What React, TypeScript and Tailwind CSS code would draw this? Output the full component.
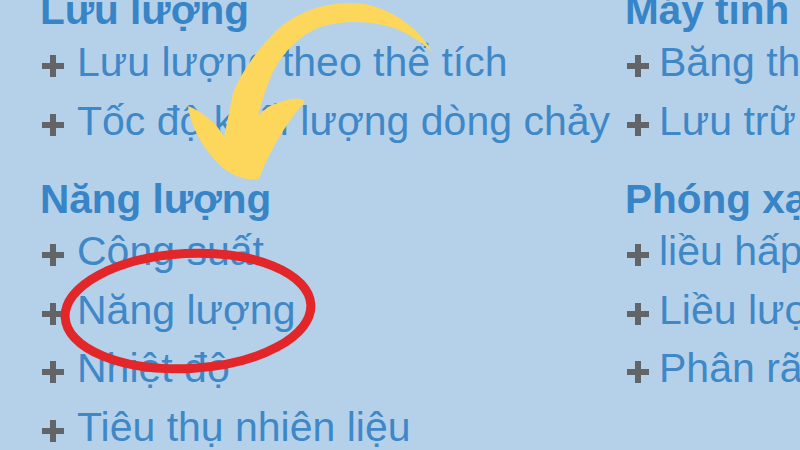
import React from "react";

type Group = { title: string; items: string[] };

const left: Group[] = [
  { title: "Lưu lượng", items: ["Lưu lượng theo thể tích", "Tốc độ khối lượng dòng chảy"] },
  { title: "Năng lượng", items: ["Công suất", "Năng lượng", "Nhiệt độ", "Tiêu thụ nhiên liệu"] },
];

const right: Group[] = [
  { title: "Máy tính", items: ["Băng thông", "Lưu trữ dữ liệu"] },
  { title: "Phóng xạ", items: ["liều hấp thụ", "Liều lượng tương đương", "Phân rã phóng xạ"] },
];

function Plus() {
  return (
    <svg width="22" height="22" viewBox="0 0 22 22" className="ml-[2px] mt-[8px] shrink-0">
      <rect x="0" y="8" width="22" height="6" fill="#626468" />
      <rect x="8" y="0" width="6" height="22" fill="#626468" />
    </svg>
  );
}

function Column({ groups, gapClass, widthClass }: { groups: Group[]; gapClass: string; widthClass: string }) {
  return (
    <div className={`${widthClass} shrink-0 -mt-[12px] flex flex-col`}>
      {groups.map((g, gi) => (
        <div key={g.title} className={gi > 0 ? "mt-[27px]" : ""}>
          <div className="text-[40.5px] leading-[44px] font-bold text-[#3785c6] whitespace-nowrap">{g.title}</div>
          <div className="mt-[1px]">
            {g.items.map((it) => (
              <div key={it} className="flex items-center h-[58.5px] whitespace-nowrap">
                <Plus />
                <span className={`${gapClass} text-[41px] leading-[58.5px] text-[#3f88c7]`}>{it}</span>
              </div>
            ))}
          </div>
        </div>
      ))}
    </div>
  );
}

export default function App() {
  return (
    <div className="relative w-[800px] h-[450px] overflow-hidden bg-[#b5d1ea] font-['Liberation_Sans',Arial,sans-serif]">
      <div className="flex pl-[40px]">
        <Column groups={left} gapClass="ml-[13px]" widthClass="w-[585px]" />
        <Column groups={right} gapClass="ml-[10px]" widthClass="w-[300px]" />
      </div>
      <svg className="absolute left-0 top-0 pointer-events-none" width="800" height="450" viewBox="0 0 800 450">
        <path
          d="M433,53 C420,30 395,10 365,4 C335,0 300,8 275,32 C255,52 240,75 233,93 L229,113 L224,137 C218,125 205,113 188,106 C190,125 203,150 223,168 C236,178 250,181 259,179 C270,150 288,120 305,102 C301,95 285,99 268,107 L258,116 C262,100 267,85 273,72 C283,52 300,35 320,27 C350,18 385,22 405,33 C418,40 428,47 433,53 Z"
          fill="#fcd75c"
        />
        <ellipse cx="188" cy="311" rx="123" ry="57.5" fill="none" stroke="#e3262a" strokeWidth="9" transform="rotate(-3 188 311)" />
      </svg>
    </div>
  );
}
